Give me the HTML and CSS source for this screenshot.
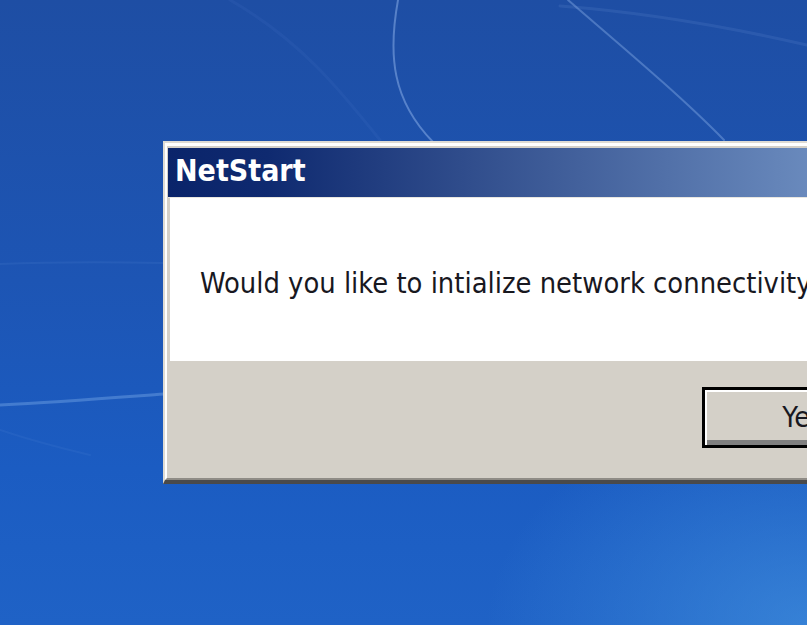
FILE: index.html
```html
<!DOCTYPE html>
<html lang="en">
<head>
<meta charset="utf-8">
<title>NetStart</title>
<link rel="stylesheet" href="styles.css">
</head>
<body>
<div class="desktop">
  <svg class="wallpaper" width="807" height="625" viewBox="0 0 807 625" aria-hidden="true">
    <g fill="none" stroke-linecap="round">
      <path d="M398 0 C 388 55, 392 100, 433 142" stroke="#8fb4ec" stroke-opacity="0.5" stroke-width="2"/>
      <path d="M568 0 C 620 45, 680 95, 724 140" stroke="#8fb4ec" stroke-opacity="0.4" stroke-width="2"/>
      <path d="M560 6 C 640 12, 720 25, 807 45" stroke="#7fa6e4" stroke-opacity="0.14" stroke-width="3"/>
      <path d="M0 405 C 60 402, 110 398, 164 394" stroke="#7fb0ea" stroke-opacity="0.4" stroke-width="3"/>
      <path d="M0 264 C 50 262, 110 262, 164 263" stroke="#6f9ee0" stroke-opacity="0.12" stroke-width="2"/>
      <path d="M0 430 C 30 440, 60 448, 90 455" stroke="#6f9ee0" stroke-opacity="0.1" stroke-width="2"/>
      <path d="M230 0 C 300 40, 340 90, 380 140" stroke="#6f9ee0" stroke-opacity="0.08" stroke-width="3"/>
    </g>
  </svg>

  <div class="window">
    <div class="frame">
      <div class="titlebar"><span class="title">NetStart</span></div>
      <div class="message">
        <p class="text">Would you like to intialize network connectivity?</p>
      </div>
      <div class="actions">
        <button class="btn btn-default" type="button">Yes</button>
        <button class="btn" type="button">No</button>
      </div>
    </div>
  </div>
</div>
</body>
</html>
```

FILE: styles.css
```css
html, body {
  margin: 0;
  padding: 0;
  width: 807px;
  height: 625px;
  overflow: hidden;
}

.desktop {
  position: relative;
  width: 807px;
  height: 625px;
  overflow: hidden;
  background:
    radial-gradient(ellipse 320px 220px at 807px 625px, rgba(70, 150, 225, 0.6), rgba(70, 150, 225, 0) 100%),
    linear-gradient(180deg, #1e4ea4 0%, #1d55b4 45%, #1b5cc2 75%, #1f62c6 100%);
}

.wallpaper {
  position: absolute;
  left: 0;
  top: 0;
}

.window {
  position: absolute;
  left: 163px;
  top: 141px;
  width: 1010px;
  border-style: solid;
  border-width: 2px 3px 4px 2px;
  border-color: #dedbd4 #404040 #4a4a4a #dedbd4;
  background: #d4d0c8;
}

.frame {
  border-style: solid;
  border-width: 3px 2px 2px 2px;
  border-color: #ffffff #8a8780 #8f8c86 #ffffff;
  padding: 2px 1px 0 1px;
  background: #d4d0c8;
}

.titlebar {
  height: 50px;
  box-sizing: border-box;
  padding: 6px 0 0 7px;
  background: linear-gradient(90deg, #0a246a 0%, #0f2a70 10%, #a6caf0 100%);
  border-bottom: 1px solid #e8e6e0;
}

.title {
  font-family: "DejaVu Sans Condensed", "DejaVu Sans", sans-serif;
  font-stretch: semi-condensed;
  font-weight: bold;
  font-size: 30px;
  line-height: 34px;
  color: #ffffff;
}

.message {
  margin-left: 2px;
  height: 163px;
  box-sizing: border-box;
  padding: 69px 0 0 30px;
  background: #ffffff;
}

.text {
  margin: 0;
  font-family: "DejaVu Sans Condensed", "DejaVu Sans", sans-serif;
  font-stretch: semi-condensed;
  font-size: 28.8px;
  line-height: 33px;
  color: #18181f;
  white-space: nowrap;
}

.actions {
  display: flex;
  gap: 14px;
  height: 117px;
  box-sizing: border-box;
  padding: 26px 0 0 534px;
}

.btn {
  width: 202px;
  height: 61px;
  box-sizing: border-box;
  padding: 0;
  border: 3px solid #000000;
  background: #d4d0c8;
  box-shadow: inset 2px 2px 0 #ffffff, inset -5px -5px 0 #808080;
  font-family: "DejaVu Sans Condensed", "DejaVu Sans", sans-serif;
  font-stretch: semi-condensed;
  font-size: 28.8px;
  line-height: 33px;
  color: #18181f;
}

.btn:not(.btn-default) {
  border-color: #ffffff #404040 #404040 #ffffff;
  border-width: 2px;
}
```
